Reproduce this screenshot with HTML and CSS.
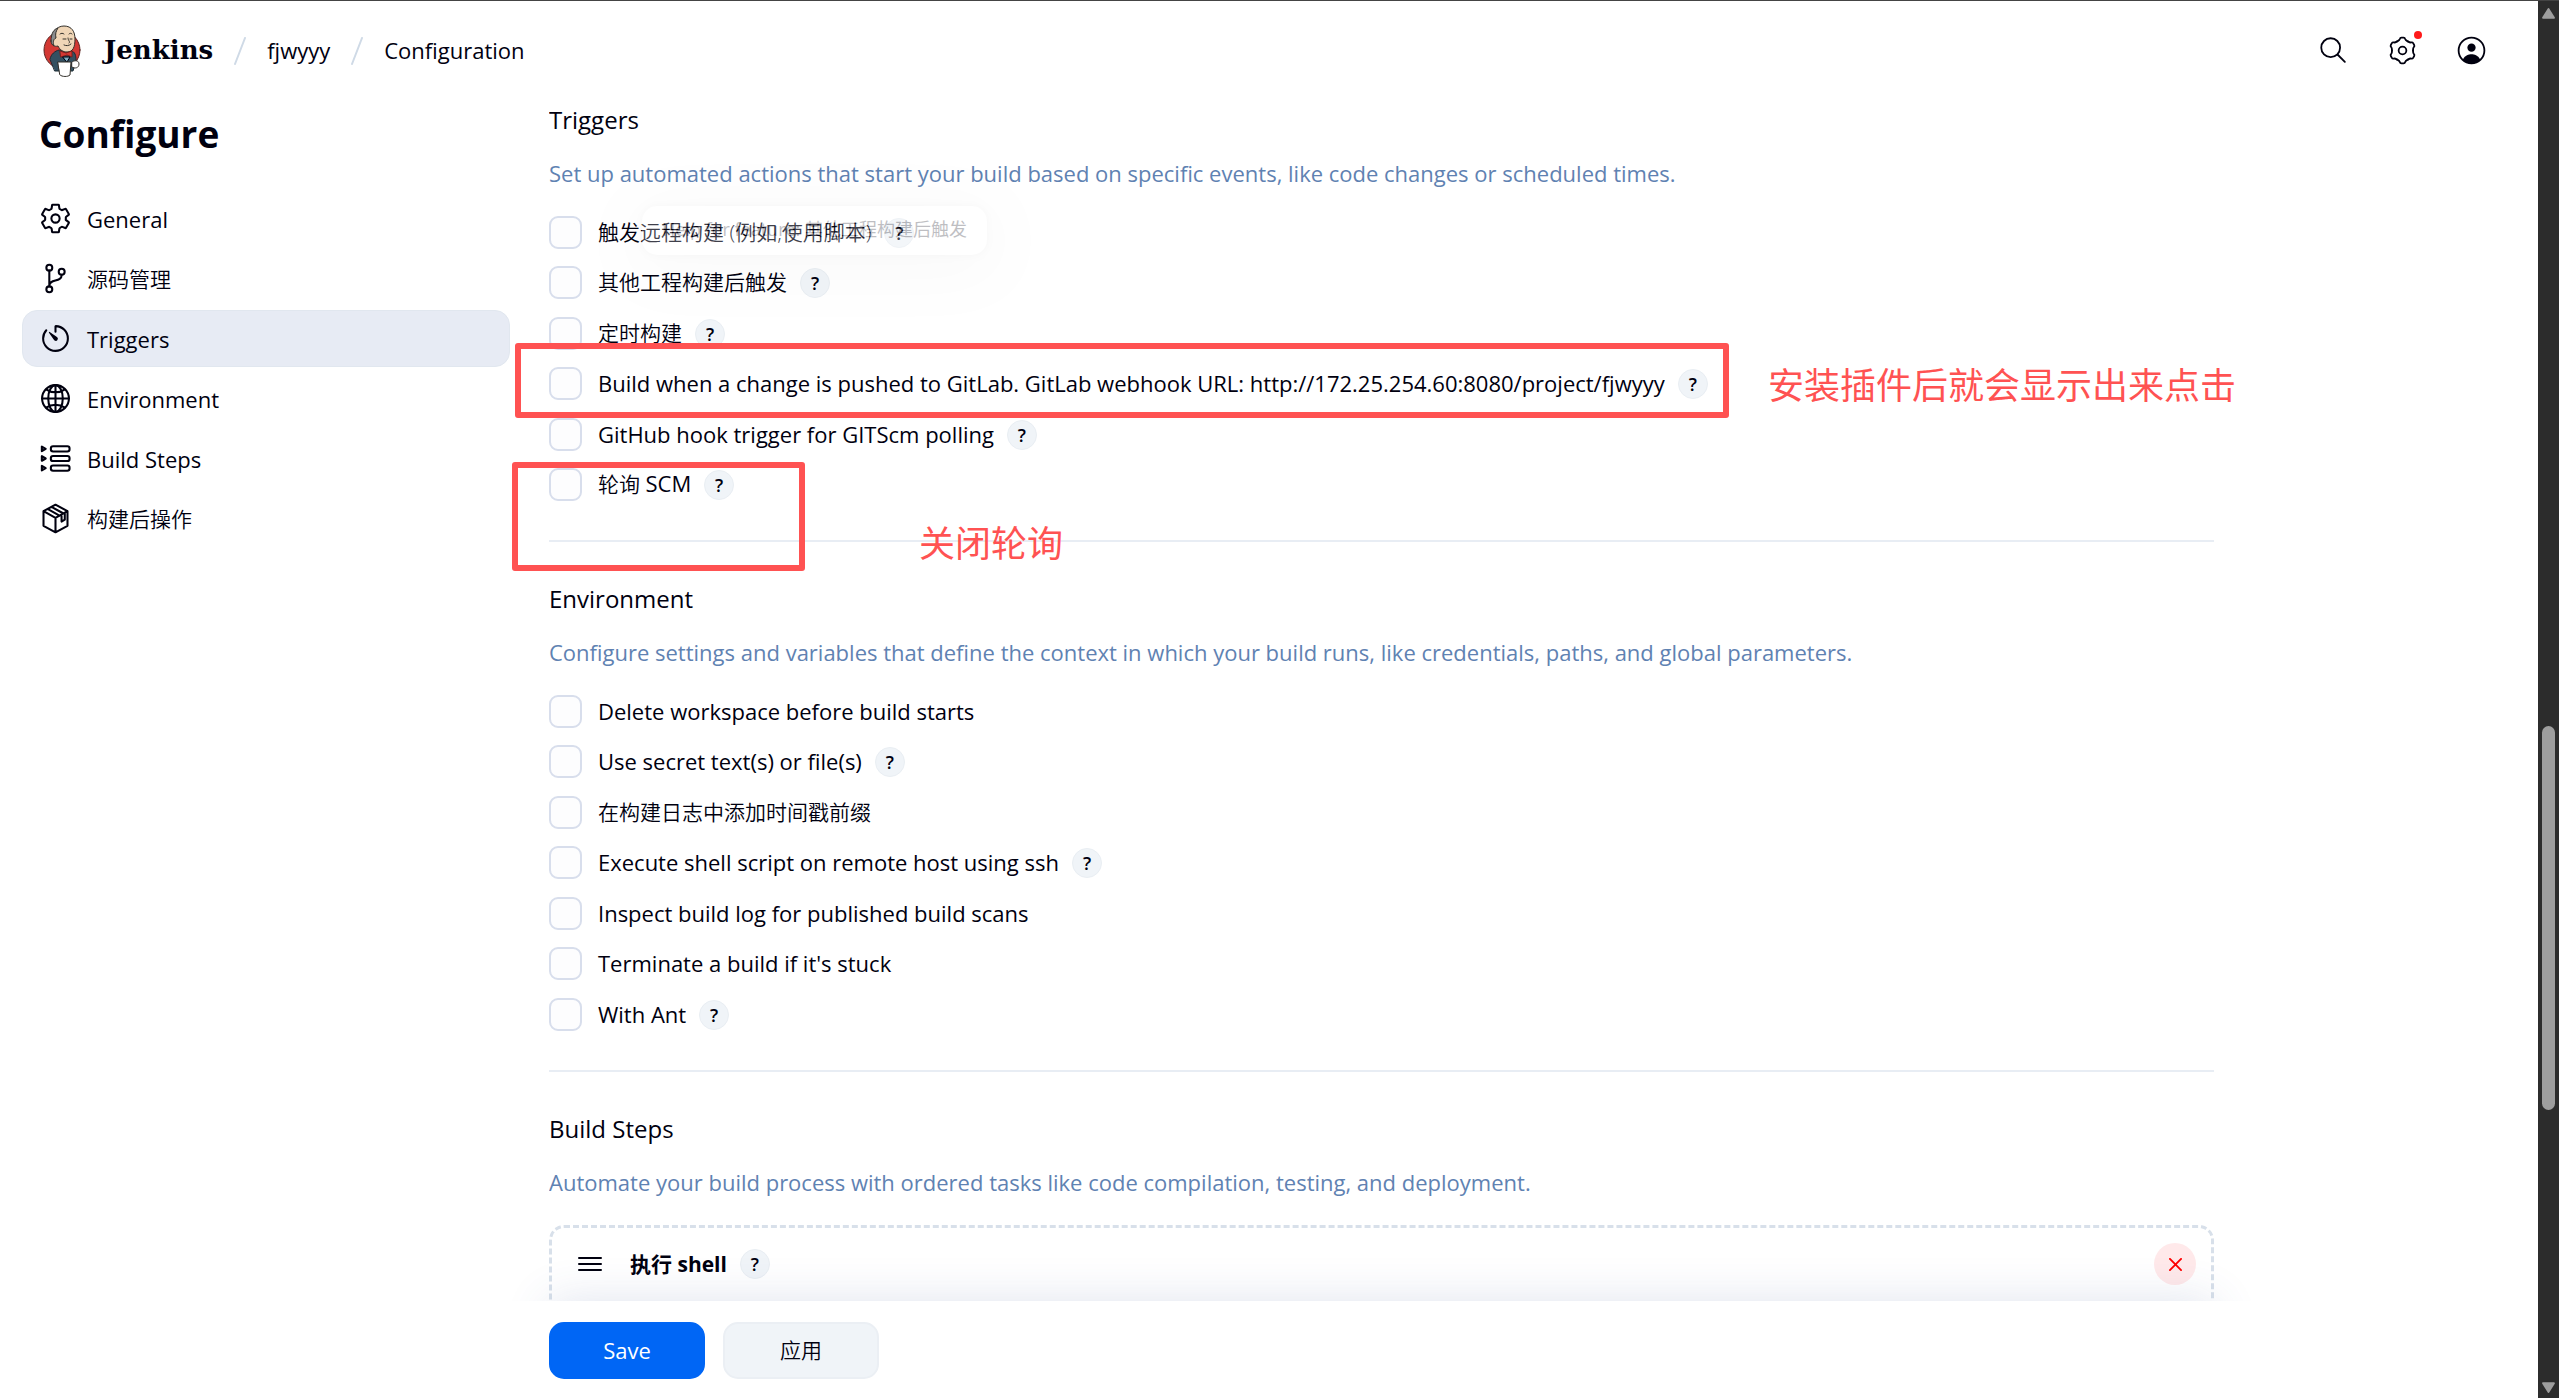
FILE: index.html
```html
<!DOCTYPE html>
<html lang="zh-CN">

<head>
    <title>fjwyyy Config [Jenkins]</title>
    <meta charset="UTF-8" />
    <link rel="stylesheet" href="styles.css">
</head>

<body>
    <svg class="sprite">
        <symbol id="bump" viewBox="0 0 512 512">
            <path d="M174 114C192 104 208 98 214 78Q220 56 240 56H272Q292 56 298 78C304 98 320 104 338 114" />
        </symbol>
    </svg>

    <div class="page">
        <header class="header">
            <a class="brand" href="#">
                <svg class="logo" viewBox="0 0 38 52">
                    <ellipse cx="19" cy="25" rx="18" ry="18.500" fill="#d33833" stroke="#5b2421" />
                    <path d="M7 34c1-5 5-8 9-9l13 1c4 2 4 6 4 11l-3 9H12z" fill="#335061" stroke="#1b2a33" />
                    <path d="M9 17c0-9 4-16 12-16 8 0 11 6 11 13 0 8-2 13-8 13-4 0-7-2-9-6-4 1-6-1-6-4z" fill="#f0d6b7" stroke="#33302b" />
                    <path d="M8 16C8 8 11 4 15 3c-2 3-3 6-2 10-3 1-3 5-2 8-2-1-3-3-3-5z" fill="#8a8c8e" stroke="#33302b" />
                    <path d="M17 9c1-1 3-1 4 0M26 9c1-1 2-1 3 0M20 14h3M27 14h2M25 13c0 3 3 4 1 5M21 20c2 1 5 1 7-1" fill="none" stroke="#33302b" />
                    <path d="M17 26l6 2 6-2v6l-5-2-6 2z" fill="#d33833" stroke="#7d1f1b" />
                    <path d="M20 32h7l-3 5z" fill="#81b0c4" />
                    <path d="M29 37c2-2 7-2 7 2s-4 5-7 3z" fill="#fff" stroke="#33302b" />
                    <path d="M15 37h13l-1 13c-2 2-8 2-10 0z" fill="#fff" stroke="#33302b" />
                </svg>
                <span class="brand-name">Jenkins</span>
            </a>
            <svg class="slash" viewBox="0 0 12 28"><path d="M11 1L1 27" /></svg>
            <a class="crumb" href="#">fjwyyy</a>
            <svg class="slash" viewBox="0 0 12 28"><path d="M11 1L1 27" /></svg>
            <a class="crumb" href="#">Configuration</a>
            <div class="actions">
                <button class="action" aria-label="Search">
                    <svg class="icon" viewBox="0 0 512 512"><circle cx="212" cy="212" r="146" /><path d="M322 322l110 110" /></svg>
                </button>
                <button class="action" aria-label="Manage Jenkins">
                    <svg class="icon" viewBox="0 0 512 512">
                        <circle cx="256" cy="256" r="60" />
                        <use href="#bump" width="512" height="512" />
                        <use href="#bump" width="512" height="512" transform="rotate(60 256 256)" />
                        <use href="#bump" width="512" height="512" transform="rotate(120 256 256)" />
                        <use href="#bump" width="512" height="512" transform="rotate(180 256 256)" />
                        <use href="#bump" width="512" height="512" transform="rotate(240 256 256)" />
                        <use href="#bump" width="512" height="512" transform="rotate(300 256 256)" />
                    </svg>
                    <span class="dot"></span>
                </button>
                <button class="action" aria-label="User">
                    <svg class="icon" viewBox="0 0 512 512">
                        <circle cx="256" cy="256" r="200" />
                        <g class="solid"><circle cx="256" cy="212" r="64" /><path d="M120 398c40-70 90-82 136-82s96 12 136 82c-80 78-192 78-272 0z" /></g>
                    </svg>
                </button>
            </div>
        </header>

        <div class="layout">
            <aside class="sidebar">
                <h1>Configure</h1>
                <nav class="tasks">
                    <a class="task" href="#">
                        <svg class="icon" viewBox="0 0 512 512"><circle cx="256" cy="256" r="64" /><path d="M416.39 256a154.34 154.34 0 01-1.53 20.79l45.21 35.46a10.81 10.81 0 012.45 13.75l-42.77 74a10.81 10.81 0 01-13.14 4.59l-44.9-18.08a16.11 16.11 0 00-15.17 1.75A164.48 164.48 0 01325 400.8a15.94 15.94 0 00-8.82 12.14l-6.73 47.89a11.08 11.08 0 01-10.68 9.17h-85.54a11.11 11.11 0 01-10.69-8.87l-6.72-47.82a16.07 16.07 0 00-9-12.22 155.3 155.3 0 01-21.46-12.57 16 16 0 00-15.11-1.71l-44.89 18.07a10.81 10.81 0 01-13.14-4.58l-42.77-74a10.8 10.8 0 012.45-13.75l38.21-30a16.05 16.05 0 006-14.08c-.36-4.17-.58-8.33-.58-12.5s.21-8.27.58-12.35a16 16 0 00-6.07-13.94l-38.19-30A10.81 10.81 0 0149.48 186l42.77-74a10.81 10.81 0 0113.14-4.59l44.9 18.08a16.11 16.11 0 0015.17-1.75A164.48 164.48 0 01187 111.2a15.94 15.94 0 008.82-12.14l6.73-47.89A11.08 11.08 0 01213.23 42h85.54a11.11 11.11 0 0110.69 8.87l6.72 47.82a16.07 16.07 0 009 12.22 155.3 155.3 0 0121.46 12.57 16 16 0 0015.11 1.71l44.89-18.07a10.81 10.81 0 0113.14 4.58l42.77 74a10.8 10.8 0 01-2.45 13.75l-38.21 30a16.05 16.05 0 00-6.05 14.08c.33 4.14.55 8.3.55 12.47z" /></svg>General
                    </a>
                    <a class="task cjk" href="#">
                        <svg class="icon" viewBox="0 0 512 512"><circle cx="160" cy="88" r="46" /><circle cx="160" cy="424" r="46" /><circle cx="352" cy="152" r="46" /><path d="M160 378V134M352 198c0 128-192 52-192 172" /></svg>源码管理
                    </a>
                    <a class="task active" href="#triggers">
                        <svg class="icon" viewBox="0 0 512 512"><path d="M112.91 128A191.85 191.85 0 0064 254c-1.180 106.350 85.650 193.800 192 194 106.200.2 192-85.830 192-192 0-104.540-83.550-189.610-187.500-192a4.360 4.360 0 00-4.500 4.370V152" /><path class="solid" d="M233.380 278.630l-79-113a8.130 8.130 0 0111.320-11.320l113 79a32.500 32.500 0 01-37.250 53.260 33.210 33.210 0 01-8.070-7.940z" /></svg>Triggers
                    </a>
                    <a class="task" href="#environment">
                        <svg class="icon" viewBox="0 0 512 512"><circle cx="256" cy="256" r="208" /><ellipse cx="256" cy="256" rx="113" ry="208" /><path d="M117 117c38 27 87 43 139 43s101-16 139-43M395 395c-38-27-87-43-139-43s-101 16-139 43M256 48v416M464 256H48" /></svg>Environment
                    </a>
                    <a class="task" href="#steps">
                        <svg class="icon" viewBox="0 0 512 512"><rect x="184" y="66" width="290" height="80" rx="34" /><rect x="184" y="216" width="290" height="80" rx="34" /><rect x="184" y="366" width="290" height="80" rx="34" /><path d="M44 70v72l60-36zM44 220v72l60-36zM44 370v72l60-36z" /></svg>Build Steps
                    </a>
                    <a class="task cjk" href="#">
                        <svg class="icon" viewBox="0 0 512 512"><path d="M256 42l186 100v228L256 470 70 370V142zM70 142l186 104 186-104M256 246v224M132 108l186 104M194 76l186 102M350 196v108l50-30V168" /></svg>构建后操作
                    </a>
                </nav>
            </aside>

            <main class="main">
                <form class="content">
                    <section id="triggers">
                        <h2>Triggers</h2>
                        <p class="description">Set up automated actions that start your build based on specific events, like code changes or scheduled times.</p>
                        <div class="options">
                            <div class="option"><input type="checkbox" id="t1"><label class="cjk" for="t1">触发远程构建 (例如,使用脚本)</label><button type="button" class="help">?</button></div>
                            <div class="option"><input type="checkbox" id="t2"><label class="cjk" for="t2">其他工程构建后触发</label><button type="button" class="help">?</button></div>
                            <div class="option"><input type="checkbox" id="t3"><label class="cjk" for="t3">定时构建</label><button type="button" class="help">?</button></div>
                            <div class="option"><input type="checkbox" id="t4"><label for="t4">Build when a change is pushed to GitLab. GitLab webhook URL: http://172.25.254.60:8080/project/fjwyyy</label><button type="button" class="help">?</button></div>
                            <div class="option"><input type="checkbox" id="t5"><label for="t5">GitHub hook trigger for GITScm polling</label><button type="button" class="help">?</button></div>
                            <div class="option"><input type="checkbox" id="t6"><label class="cjk" for="t6">轮询 <span class="latin">SCM</span></label><button type="button" class="help">?</button></div>
                        </div>
                    </section>
                    <section id="environment">
                        <h2>Environment</h2>
                        <p class="description">Configure settings and variables that define the context in which your build runs, like credentials, paths, and global parameters.</p>
                        <div class="options">
                            <div class="option"><input type="checkbox" id="e1"><label for="e1">Delete workspace before build starts</label></div>
                            <div class="option"><input type="checkbox" id="e2"><label for="e2">Use secret text(s) or file(s)</label><button type="button" class="help">?</button></div>
                            <div class="option"><input type="checkbox" id="e3"><label class="cjk" for="e3">在构建日志中添加时间戳前缀</label></div>
                            <div class="option"><input type="checkbox" id="e4"><label for="e4">Execute shell script on remote host using ssh</label><button type="button" class="help">?</button></div>
                            <div class="option"><input type="checkbox" id="e5"><label for="e5">Inspect build log for published build scans</label></div>
                            <div class="option"><input type="checkbox" id="e6"><label for="e6">Terminate a build if it's stuck</label></div>
                            <div class="option"><input type="checkbox" id="e7"><label for="e7">With Ant</label><button type="button" class="help">?</button></div>
                        </div>
                    </section>
                    <section id="steps">
                        <h2>Build Steps</h2>
                        <p class="description">Automate your build process with ordered tasks like code compilation, testing, and deployment.</p>
                        <div class="step">
                            <svg class="handle" viewBox="0 0 24 14"><path d="M1 1h22M1 7h22M1 13h22" /></svg>
                            <b class="step-name">执行 shell</b>
                            <button type="button" class="help">?</button>
                            <button type="button" class="delete" aria-label="Delete"><svg viewBox="0 0 14 14"><path d="M1 1l12 12M13 1L1 13" /></svg></button>
                        </div>
                    </section>
                </form>
                <div class="bottom-bar">
                    <button class="button primary">Save</button>
                    <button class="button cjk">应用</button>
                </div>
            </main>
        </div>

        <div class="scrollbar">
            <svg class="arrow" viewBox="0 0 14 12"><path d="M7 2l5 8H2z" /></svg>
            <div class="thumb"></div>
            <svg class="arrow" viewBox="0 0 14 12"><path d="M2 2h10l-5 8z" /></svg>
        </div>
    </div>

    <div class="tooltip">Help for feature: 其他工程构建后触发</div>

    <!-- notes drawn over the page -->
    <div class="mark mark-gitlab"></div>
    <div class="mark mark-scm"></div>
    <div class="note note-gitlab">安装插件后就会显示出来点击</div>
    <div class="note note-scm">关闭轮询</div>
</body>

</html>
```

FILE: styles.css
```css
* {
    box-sizing: border-box;
}

body {
    margin: 0;
    background: #fff;
    color: #00000f;
    font-family: "Open Sans", "Noto Sans CJK SC", sans-serif;
    font-size: 22px;
    line-height: 30px;
}

a {
    color: inherit;
    text-decoration: none;
}

button {
    padding: 0;
    border: none;
    background: none;
    color: inherit;
    font: inherit;
}

svg {
    display: block;
    fill: none;
    stroke: currentColor;
    stroke-width: 2;
    stroke-linecap: round;
    stroke-linejoin: round;
}

.sprite {
    position: absolute;
    width: 0;
    height: 0;
}

.cjk {
    font-size: 21px;
    font-weight: 350;
}

.latin {
    font-size: 22px;
    font-weight: 400;
}

.page {
    display: grid;
    grid-template-columns: minmax(0, 1fr) 21px;
    grid-template-rows: 99px minmax(0, 1fr);
    height: 100vh;
    border-top: 1px solid #444;
    overflow: hidden;
}

/* header */
.header {
    display: flex;
    align-items: center;
    gap: 21px;
    padding: 0 50px 0 43px;
}

.brand {
    display: flex;
    align-items: center;
    gap: 23px;
}

.logo {
    width: 38px;
    height: 52px;
    stroke-width: 1;
}

.brand-name {
    padding-bottom: 2px;
    font-family: "DejaVu Serif", serif;
    font-size: 26px;
    font-weight: bold;
}

.crumb {
    padding-bottom: 2px;
}

.slash {
    width: 12px;
    height: 28px;
    color: #cfdae6;
}

.actions {
    display: flex;
    gap: 36px;
    margin-left: auto;
}

.action {
    position: relative;
}

.icon {
    width: 33px;
    height: 33px;
    stroke-width: 32;
}

.action .icon {
    stroke-width: 28;
}

.solid {
    fill: currentColor;
    stroke: none;
}

.dot {
    position: absolute;
    top: -3px;
    right: -3px;
    width: 8px;
    height: 8px;
    border-radius: 50%;
    background: #ff1a1a;
}

/* columns */
.layout {
    display: grid;
    grid-template-columns: 488px minmax(0, 1665px);
    gap: 39px;
    min-height: 0;
    padding-left: 22px;
}

h1 {
    margin: 9px 0 31px 17px;
    font-size: 37px;
    line-height: 50px;
}

.tasks {
    display: grid;
    gap: 3px;
}

.task {
    display: flex;
    align-items: center;
    gap: 15px;
    height: 57px;
    padding-left: 17px;
    border-radius: 15px;
}

.task.active {
    border: 1px solid #e1e7ef;
    padding-left: 16px;
    background: #e7ebf4;
}

.main {
    display: flex;
    flex-direction: column;
    min-height: 0;
}

.content {
    flex: 1;
    min-height: 0;
    padding-top: 4px;
    overflow: hidden;
}

section + section {
    margin-top: 39px;
    padding-top: 41px;
    border-top: 2px solid #e8edf4;
}

h2 {
    margin: 0;
    font-size: 24px;
    font-weight: normal;
    line-height: 32px;
}

.description {
    margin: 22px 0 28px;
    color: #5f82b2;
}

.option {
    display: flex;
    align-items: center;
    height: 33px;
    margin-bottom: 17px;
}

.option:nth-child(even) {
    margin-bottom: 18px;
}

.option:last-child {
    margin-bottom: 0;
}

.option input {
    appearance: none;
    width: 33px;
    height: 33px;
    margin: 0 16px 0 0;
    border: 2px solid #d8deec;
    border-radius: 9px;
    background: #fdfdfe;
}

.option label {
    padding-bottom: 2px;
}

.help {
    width: 30px;
    height: 30px;
    margin-left: 13px;
    border: 1px solid #e9eef3;
    border-radius: 50%;
    background: #f0f4f8;
    font-size: 18px;
    font-weight: 600;
    line-height: 28px;
}

.step {
    display: flex;
    align-items: center;
    height: 200px;
    padding: 16px 15px 138px 26px;
    border: 3px dashed #d8e0ea;
    border-radius: 15px;
}

.step-name {
    font-size: 21px;
}

.handle {
    width: 24px;
    height: 14px;
    margin-right: 28px;
}

.delete {
    display: grid;
    place-items: center;
    width: 42px;
    height: 42px;
    margin-left: auto;
    border-radius: 50%;
    background: #ffe9ea;
    color: #f00;
}

.delete svg {
    width: 13px;
    height: 13px;
}

.bottom-bar {
    position: relative;
    display: flex;
    gap: 18px;
    padding: 21px 0 19px;
}

/* shadow only on the upper side */
.bottom-bar::before {
    content: "";
    position: absolute;
    inset: 0;
    box-shadow: 0 0 46px rgba(60, 90, 150, 0.16);
    clip-path: inset(-60px -60px 100% -60px);
    pointer-events: none;
}

.button {
    width: 156px;
    height: 57px;
    padding-bottom: 2px;
    border: 2px solid #ebeff4;
    border-radius: 15px;
    background: #f0f4f8;
}

.button.primary {
    border-color: #0066f5;
    background: #0066f5;
    color: #fff;
}

/* window scrollbar */
.scrollbar {
    grid-column: 2;
    grid-row: 1 / 3;
    display: flex;
    flex-direction: column;
    align-items: center;
    justify-content: space-between;
    padding: 6px 0 4px;
    background: #2c2c2c;
}

.arrow {
    width: 15px;
    height: 13px;
    color: #9e9e9e;
    fill: currentColor;
}

.thumb {
    width: 13px;
    height: 384px;
    margin-top: 434px;
    border-radius: 7px;
    background: #9e9e9e;
}

/* overlays */
.tooltip {
    position: absolute;
    top: 206px;
    left: 642px;
    padding: 8px 20px 11px;
    border-radius: 15px;
    background: #fff;
    box-shadow: 0 10px 60px rgba(0, 0, 0, 0.1), 0 0 8px rgba(0, 0, 0, 0.1);
    font-size: 18px;
    opacity: 0.25;
}

.mark {
    position: absolute;
    border: 6px solid #ff5252;
    border-radius: 3px;
}

.mark-gitlab {
    top: 343px;
    left: 515px;
    width: 1214px;
    height: 75px;
}

.mark-scm {
    top: 462px;
    left: 512px;
    width: 293px;
    height: 109px;
}

.note {
    position: absolute;
    color: #ff5252;
    font-size: 36px;
    line-height: 48px;
    white-space: nowrap;
}

.note-gitlab {
    top: 362px;
    left: 1768px;
}

.note-scm {
    top: 520px;
    left: 919px;
}
```
